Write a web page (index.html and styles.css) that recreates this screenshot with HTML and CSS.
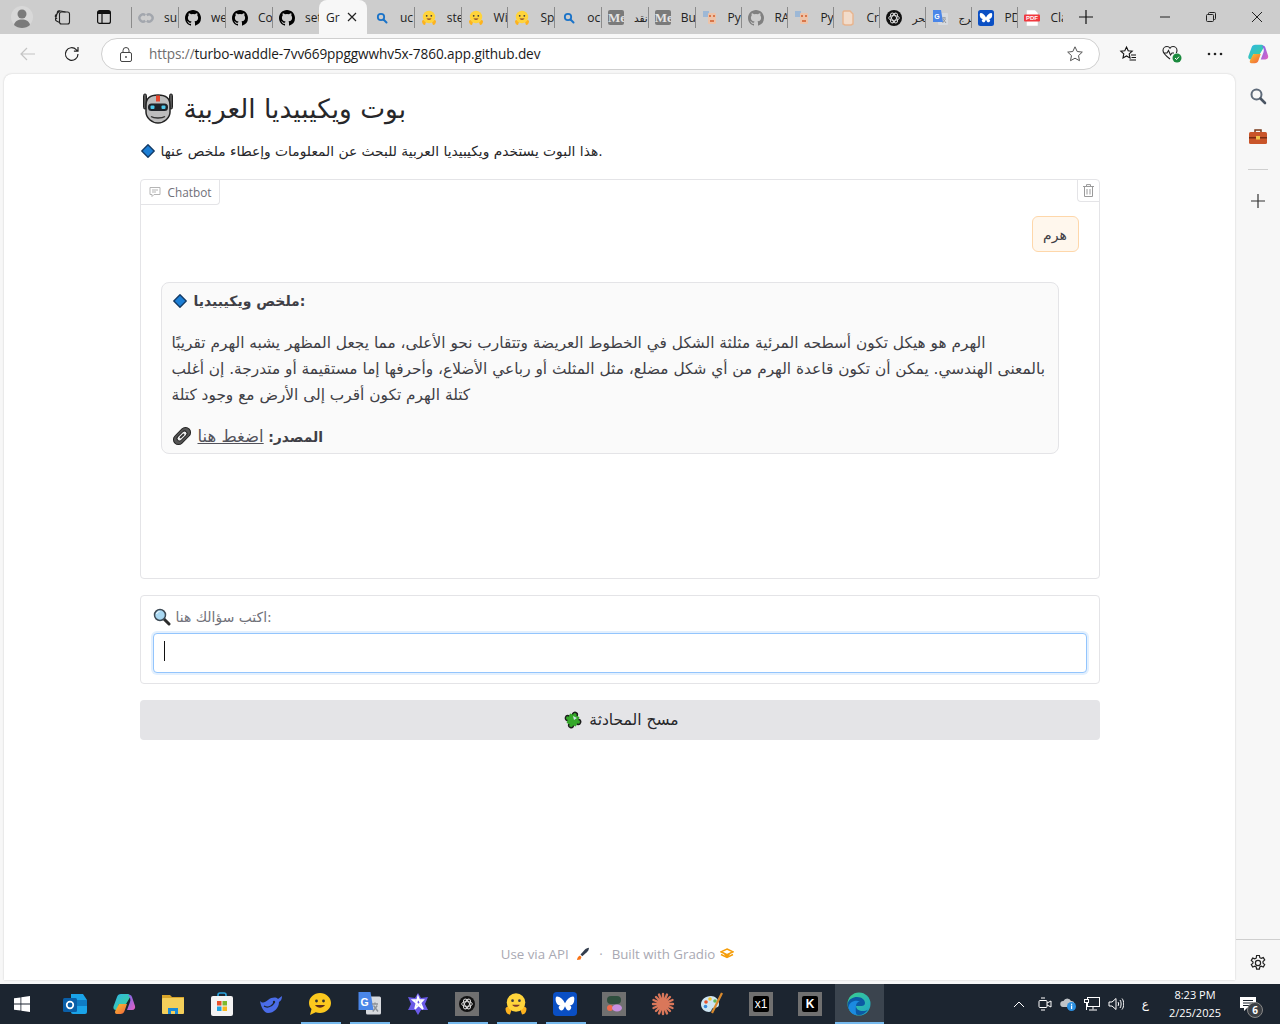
FILE: index.html
```html
<!DOCTYPE html>
<html lang="ar">
<head>
  <meta charset="UTF-8">
  <title>Gradio</title>
  <link rel="stylesheet" href="styles.css">
</head>
<body dir="ltr">
  <svg class="sprites" aria-hidden="true">
    <defs>
      <symbol id="i-github" viewBox="0 0 16 16"><path d="M8 0C3.58 0 0 3.58 0 8c0 3.54 2.29 6.53 5.47 7.59.4.07.55-.17.55-.38v-1.34c-2.23.48-2.7-1.07-2.7-1.07-.36-.92-.89-1.17-.89-1.17-.73-.5.05-.49.05-.49.8.06 1.23.83 1.23.83.71 1.22 1.87.87 2.33.66.07-.52.28-.87.51-1.07-1.78-.2-3.64-.89-3.64-3.95 0-.87.31-1.59.82-2.15-.08-.2-.36-1.02.08-2.12 0 0 .67-.21 2.2.82a7.6 7.6 0 0 1 4 0c1.53-1.04 2.2-.82 2.2-.82.44 1.1.16 1.92.08 2.12.51.56.82 1.27.82 2.15 0 3.07-1.87 3.75-3.65 3.95.29.25.54.73.54 1.48v2.2c0 .21.15.46.55.38A8 8 0 0 0 16 8c0-4.42-3.58-8-8-8z"/></symbol>
      <symbol id="i-search" viewBox="0 0 16 16"><circle cx="7" cy="7" r="3.200" fill="none" stroke="#1a73c8" stroke-width="1.800"/><path d="M9.500 9.500l3 3" stroke="#1a73c8" stroke-width="2" stroke-linecap="round"/></symbol>
      <symbol id="i-colab" viewBox="0 0 16 16"><g fill="none" stroke="#a2a6ad" stroke-width="2.400"><path d="M7.200 5.300a3.500 3.500 0 1 0 0 5.400"/><path d="M8.800 5.300a3.500 3.500 0 1 1 0 5.400"/></g></symbol>
      <symbol id="i-hf" viewBox="0 0 16 16"><path d="M1 11c1-2 3-1 4 1l-1 3c-2 0-3-2-3-4zM15 11c-1-2-3-1-4 1l1 3c2 0 3-2 3-4z" fill="#fdb21e"/><circle cx="8" cy="7" r="6.200" fill="#ffd43b"/><circle cx="5.700" cy="5.800" r=".9" fill="#3a3b45"/><circle cx="10.300" cy="5.800" r=".9" fill="#3a3b45"/><path d="M5.500 8.500c1 1.800 4 1.800 5 0z" fill="#7a3b2e"/></symbol>
      <symbol id="i-py" viewBox="0 0 16 16"><rect x="1" y="1" width="6" height="6" fill="#9db8d6"/><rect x="6" y="3" width="8" height="11" rx="1" fill="#edc3a8"/><rect x="7" y="5" width="2" height="2" fill="#d9764a"/><rect x="11" y="5" width="2" height="2" fill="#d9764a"/><rect x="8" y="10" width="4" height="2" fill="#d9764a"/></symbol>
      <symbol id="i-doc" viewBox="0 0 16 16"><path d="M4 1h6l3 3v10l-2 1H5l-2-1V2z" fill="#f2dccb" stroke="#e8b48e" stroke-width="1.400"/></symbol>
      <symbol id="i-openai" viewBox="0 0 16 16"><circle cx="8" cy="8" r="8" fill="#111"/><g fill="none" stroke="#ddd" stroke-width=".9"><ellipse cx="8" cy="8" rx="5.400" ry="2.400"/><ellipse cx="8" cy="8" rx="5.400" ry="2.400" transform="rotate(60 8 8)"/><ellipse cx="8" cy="8" rx="5.400" ry="2.400" transform="rotate(120 8 8)"/></g></symbol>
      <symbol id="i-translate" viewBox="0 0 16 16"><rect x="6" y="3" width="10" height="12" rx="1" fill="#d7dade"/><path d="M1 0h8l2 12H1z" fill="#4a86e8"/><text x="5" y="9" font-size="7" font-family="Liberation Sans" font-weight="700" text-anchor="middle" fill="#fff">G</text><path d="M10 8h4M12 7v1M10.500 13l3-4M11 9l3 4" stroke="#8a9096" stroke-width=".9" fill="none"/></symbol>
      <symbol id="i-fly" viewBox="0 0 16 16"><rect width="16" height="16" rx="2.500" fill="#0a4fc4"/><path d="M8 7.500C6.500 4.500 4.600 3 2.800 3 1.600 3 1.600 4.600 2 6.500c.4 1.800 1.800 2.600 3.400 2.400-1.800.4-2 1.600-1 2.800 1.200 1.400 2.600.6 3.600-2.200 1 2.800 2.400 3.600 3.600 2.200 1-1.200.8-2.400-1-2.800 1.600.2 3-.6 3.400-2.400.4-1.900.4-3.500-.8-3.500-1.800 0-3.700 1.500-5.200 4.500z" fill="#fff"/></symbol>
      <symbol id="i-pdf" viewBox="0 0 16 16"><path d="M2.500 0H11l3 3v13H2.500z" fill="#fff" stroke="#ccc" stroke-width=".5"/><rect y="4.500" width="16" height="7" rx="1" fill="#f0383e"/><text x="8" y="10.300" font-size="6" font-family="Liberation Sans" font-weight="700" text-anchor="middle" fill="#fff">PDF</text></symbol>
      <symbol id="i-diamond" viewBox="0 0 14 14"><path d="M7 .8L13.200 7 7 13.200 .8 7z" fill="#1c7fd6" stroke="#123a66" stroke-width="1.400" stroke-linejoin="round"/></symbol>
      <symbol id="i-copilot" viewBox="0 0 24 24"><defs><linearGradient id="cp1" x1="0" y1="0" x2="1" y2="1"><stop offset="0" stop-color="#2fb5e8"/><stop offset="1" stop-color="#3dd68c"/></linearGradient><linearGradient id="cp2" x1="0" y1="0" x2="1" y2="1"><stop offset="0" stop-color="#6f6df0"/><stop offset="1" stop-color="#e95fc0"/></linearGradient><linearGradient id="cp3" x1="0" y1="0" x2="1" y2="1"><stop offset="0" stop-color="#f7c22e"/><stop offset="1" stop-color="#f2603c"/></linearGradient></defs><path d="M9 2h7c1.500 0 2 1 2.500 2.500L14 12H7l-2 6H4C2 18 1 16.500 1.500 14.500L5 5c.6-1.800 2-3 4-3z" fill="url(#cp1)"/><path d="M18 3c1 0 1.500.8 2 2l3 9c.6 2-.5 4-3 4h-5l3-8c1-2.500 0-5-2-7z" fill="url(#cp2)"/><path d="M7 12h8l-2.500 7c-.6 2-2 3-4 3H5c-2 0-2.500-1.600-1.500-3.500z" fill="url(#cp3)"/></symbol>
      <symbol id="i-edge" viewBox="0 0 24 24"><defs><linearGradient id="eg1" x1="0" y1="0" x2="1" y2="1"><stop offset="0" stop-color="#3bd08f"/><stop offset="1" stop-color="#1fa3c9"/></linearGradient></defs><circle cx="12" cy="12" r="11.500" fill="url(#eg1)"/><path d="M.6 12C1.500 7 6 5 10 5c5 0 8 3 8 6 0 2-1.500 3-3.500 3H9c0 3 3 5 7 5 2 0 3.500-.5 5-1.500-2 3.500-5.500 5.500-9 5.500C6 23 1 18.500.6 12z" fill="#0c59a4"/><path d="M9 14c0-3 2-4.500 4-4.500-5-2-11 .5-11.500 6C2.500 20 6 23 10 23c-2-2-1-9-1-9z" fill="#1b8ae0"/></symbol>
    </defs>
  </svg>

  <div class="tabstrip">
    <div class="profile">
      <svg width="22" height="22" viewBox="0 0 22 22"><circle cx="11" cy="11" r="11" fill="#d8d8d8"/><circle cx="11" cy="8" r="4.500" fill="#7a7a7a"/><path d="M3 19c1-4 4-5.500 8-5.500s7 1.500 8 5.500c-2 2-5 3-8 3s-6-1-8-3z" fill="#7a7a7a"/></svg>
    </div>
    <div class="strip-btn strip-first">
      <svg width="18" height="18" viewBox="0 0 18 18" fill="none" stroke="#222" stroke-width="1.100"><rect x="6.500" y="4" width="10" height="12" rx="2"/><path d="M6.500 14.500L3.500 13c-1-.5-1.200-1-1-2l2-7c.2-1 1-1.500 2-1.200l6 1.200M4 11L2.500 9c-.6-1-.4-1.500.3-2.200L7 2.500"/></svg>
    </div>
    <div class="strip-btn">
      <svg width="16" height="16" viewBox="0 0 16 16" fill="none" stroke="#111" stroke-width="1.200"><rect x="1.600" y="1.600" width="12.800" height="12.800" rx="2"/><path d="M1.600 4.500h12.800M6 4.500v9.900"/><path d="M2 2h12v2.500H2z" fill="#111" stroke="none"/></svg>
    </div>
    <div class="tabs">
      <div class="tab"><svg class="fav"><use href="#i-colab"/></svg><span class="tab-title">su</span></div>
      <div class="tab"><svg class="fav"><use href="#i-github"/></svg><span class="tab-title">we</span></div>
      <div class="tab"><svg class="fav"><use href="#i-github"/></svg><span class="tab-title">Co</span></div>
      <div class="tab"><svg class="fav"><use href="#i-github"/></svg><span class="tab-title">set</span></div>
      <div class="tab tab-active"><span class="tab-title">Gr</span>
        <svg class="tab-close" width="10" height="10" viewBox="0 0 10 10"><path d="M1 1l8 8M9 1L1 9" stroke="#222" stroke-width="1.200"/></svg>
      </div>
      <div class="tab tab-next"><svg class="fav"><use href="#i-search"/></svg><span class="tab-title">uc</span></div>
      <div class="tab"><svg class="fav"><use href="#i-hf"/></svg><span class="tab-title">ste</span></div>
      <div class="tab"><svg class="fav"><use href="#i-hf"/></svg><span class="tab-title">Wi</span></div>
      <div class="tab"><svg class="fav"><use href="#i-hf"/></svg><span class="tab-title">Sp</span></div>
      <div class="tab"><svg class="fav"><use href="#i-search"/></svg><span class="tab-title">oc</span></div>
      <div class="tab"><span class="medium">Me</span><span class="tab-title tab-ar">نقد</span></div>
      <div class="tab"><span class="medium">Me</span><span class="tab-title">Bu</span></div>
      <div class="tab"><svg class="fav"><use href="#i-py"/></svg><span class="tab-title">Py</span></div>
      <div class="tab"><svg class="fav fav-grey"><use href="#i-github"/></svg><span class="tab-title">RA</span></div>
      <div class="tab"><svg class="fav"><use href="#i-py"/></svg><span class="tab-title">Py</span></div>
      <div class="tab"><svg class="fav"><use href="#i-doc"/></svg><span class="tab-title">Cr</span></div>
      <div class="tab"><svg class="fav"><use href="#i-openai"/></svg><span class="tab-title tab-ar">تحر</span></div>
      <div class="tab"><svg class="fav"><use href="#i-translate"/></svg><span class="tab-title tab-ar">ترج</span></div>
      <div class="tab"><svg class="fav"><use href="#i-fly"/></svg><span class="tab-title">PD</span></div>
      <div class="tab"><svg class="fav"><use href="#i-pdf"/></svg><span class="tab-title">Cla</span></div>
    </div>
    <div class="new-tab">
      <svg width="16" height="16" viewBox="0 0 16 16"><path d="M8 1v14M1 8h14" stroke="#111" stroke-width="1.200"/></svg>
    </div>
    <div class="win-controls">
      <div class="win-btn"><svg width="10" height="10" viewBox="0 0 10 10"><path d="M0 5h10" stroke="#222"/></svg></div>
      <div class="win-btn"><svg width="10" height="10" viewBox="0 0 10 10" fill="none" stroke="#222"><rect x=".5" y="2.500" width="7" height="7" rx="1"/><path d="M2.500 2.500V1.500a1 1 0 0 1 1-1h5a1 1 0 0 1 1 1v5a1 1 0 0 1-1 1h-1"/></svg></div>
      <div class="win-btn"><svg width="10" height="10" viewBox="0 0 10 10"><path d="M0 0l10 10M10 0L0 10" stroke="#222"/></svg></div>
    </div>
  </div>

  <div class="toolbar">
    <div class="nav-btn">
      <svg width="16" height="14" viewBox="0 0 16 14" fill="none" stroke="#c4c4c4" stroke-width="1.200"><path d="M15 7H1M7 1L1 7l6 6"/></svg>
    </div>
    <div class="nav-btn">
      <svg width="16" height="16" viewBox="0 0 16 16" fill="none" stroke="#222" stroke-width="1.200"><path d="M14 8a6.300 6.300 0 1 1-1.800-4.400L14 5.200M14 1v4.200H9.900"/></svg>
    </div>
    <div class="address">
      <svg class="lock" width="12" height="15" viewBox="0 0 12 15" fill="none" stroke="#444"><rect x=".5" y="5.500" width="11" height="9" rx="1.500"/><path d="M3 5.500V3.500a3 3 0 0 1 6 0v2"/><circle cx="6" cy="10" r=".9" fill="#444" stroke="none"/></svg>
      <span class="url"><span class="url-scheme">https://</span>turbo-waddle-7vv669ppggwwhv5x-7860.app.github.dev</span>
      <svg class="star" width="18" height="18" viewBox="0 0 18 18" fill="none" stroke="#555"><path d="M9 1.800l2.200 4.700 5.100.6-3.800 3.500 1 5.100L9 13.200l-4.500 2.500 1-5.100-3.800-3.500 5.100-.6z"/></svg>
    </div>
    <div class="tool-icons">
      <svg width="18" height="18" viewBox="0 0 18 18" fill="none" stroke="#111" stroke-width="1.100"><path d="M7.500 2l1.700 3.700 4 .5-3 2.700.8 4-3.500-2-3.500 2 .8-4-3-2.700 4-.5zM12 10h5M12.500 12.500h4.500M10.500 15h6.500"/></svg>
      <svg width="22" height="20" viewBox="0 0 22 20"><path d="M9 15C5 12 2 9.500 2 6.500 2 4 4 2.500 6 2.500c1.400 0 2.400.7 3 1.700.6-1 1.600-1.700 3-1.700 2 0 4 1.500 4 4 0 1-.3 1.700-.7 2.500M2.500 9H6l1.500-2.500 2 4.500L11 9h2" fill="none" stroke="#222" stroke-width="1.100"/><circle cx="16" cy="14" r="4.500" fill="#1b8a3e"/><path d="M14 14l1.500 1.500 2.500-2.800" fill="none" stroke="#fff" stroke-width="1"/></svg>
      <svg width="16" height="4" viewBox="0 0 16 4" fill="#222"><circle cx="2" cy="2" r="1.300"/><circle cx="8" cy="2" r="1.300"/><circle cx="14" cy="2" r="1.300"/></svg>
      <svg width="22" height="22"><use href="#i-copilot"/></svg>
    </div>
  </div>

  <div class="middle">
    <main class="page">
      <div class="content">
        <h1 class="title">
          <svg class="robot" width="32" height="32" viewBox="0 0 32 32">
            <rect x="1.500" y="1" width="3" height="15" rx="1.500" fill="#555" stroke="#222"/>
            <rect x="27.500" y="1" width="3" height="15" rx="1.500" fill="#555" stroke="#222"/>
            <path d="M4 12c0-7 5-10 12-10s12 3 12 10v7c0 6-6 11-12 11S4 25 4 19z" fill="#bdbdbd" stroke="#222" stroke-width="1.500"/>
            <rect x="14" y="2.500" width="4" height="6" fill="#e8452c"/>
            <rect x="6" y="10.500" width="20" height="7.500" rx="3.500" fill="#1f2328"/>
            <rect x="8.500" y="12.500" width="4" height="3.500" rx="1" fill="#4fc8ea"/>
            <rect x="19.500" y="12.500" width="4" height="3.500" rx="1" fill="#4fc8ea"/>
            <path d="M9 23.500c3 2 11 2 14 0" fill="none" stroke="#333" stroke-width="1.500"/>
          </svg>
          <span>بوت ويكيبيديا العربية</span>
        </h1>
        <p class="subtitle">
          <svg class="diamond" width="14" height="14"><use href="#i-diamond"/></svg>
          <span>هذا البوت يستخدم ويكيبيديا العربية للبحث عن المعلومات وإعطاء ملخص عنها.</span>
        </p>

        <section class="chatbot">
          <div class="chat-head">
            <div class="chat-label">
              <svg width="12" height="12" viewBox="0 0 12 12" fill="none" stroke="#b5b5b5"><path d="M1 1.500h10v7H5L3 10.500v-2H1z"/><path d="M3 4h6M3 6h4"/></svg>
              <span>Chatbot</span>
            </div>
            <div class="chat-trash">
              <svg width="11" height="13" viewBox="0 0 11 13" fill="none" stroke="#9a9a9a"><path d="M0 2.500h11M3.500 2.500V.6h4v1.900M1.500 2.500v10h8v-10M4 5v5.500M7 5v5.500"/></svg>
            </div>
          </div>
          <div class="user-row">
            <div class="user-bubble">هرم</div>
          </div>
          <div class="bot-bubble">
            <p class="bot-heading">
              <svg width="14" height="14"><use href="#i-diamond"/></svg>
              <strong>ملخص ويكيبيديا:</strong>
            </p>
            <p class="bot-text">
              <span class="line">الهرم هو هيكل تكون أسطحه المرئية مثلثة الشكل في الخطوط العريضة وتتقارب نحو الأعلى، مما يجعل المظهر يشبه الهرم تقريبًا</span>
              <span class="line">بالمعنى الهندسي. يمكن أن تكون قاعدة الهرم من أي شكل مضلع، مثل المثلث أو رباعي الأضلاع، وأحرفها إما مستقيمة أو متدرجة. إن أغلب</span>
              <span class="line">كتلة الهرم تكون أقرب إلى الأرض مع وجود كتلة</span>
            </p>
            <p class="bot-source">
              <svg width="20" height="20" viewBox="0 0 20 20" fill="none"><g transform="rotate(-45 10 10)"><rect x="0" y="5" width="20" height="10" rx="5" fill="#555" stroke="#222"/><rect x="4" y="7.500" width="12" height="5" rx="2.500" fill="#eee" stroke="#222"/><rect x="7" y="9" width="6" height="2" rx="1" fill="#333"/></g></svg>
              <span><strong>المصدر:</strong> <a href="#">اضغط هنا</a></span>
            </p>
          </div>
        </section>

        <section class="ask">
          <label class="ask-label">
            <svg width="18" height="18" viewBox="0 0 18 18"><path d="M10.500 10.500l5.500 5.500" stroke="#2b2b2b" stroke-width="3" stroke-linecap="round"/><circle cx="7" cy="7" r="5.500" fill="#a9d8f2" stroke="#3d4a55" stroke-width="1.500"/><path d="M3.500 6c.5-1.500 1.500-2.300 3-2.500" stroke="#fff" fill="none"/></svg>
            <span>اكتب سؤالك هنا:</span>
          </label>
          <div class="ask-input"><span class="caret"></span></div>
        </section>

        <button class="clear-btn" type="button">
          <svg width="18" height="18" viewBox="0 0 18 18"><g transform="rotate(20 9 9)" fill="#35a82a" stroke="#1c1c1c" stroke-width="1.400"><circle cx="9" cy="3.500" r="2.500"/><circle cx="14.500" cy="9" r="2.500"/><circle cx="9" cy="14.500" r="2.500"/><circle cx="3.500" cy="9" r="2.500"/><rect x="4" y="4" width="10" height="10" stroke="none"/></g><path d="M9 5l4 2-3 2z" fill="#cfe3ea"/></svg>
          <span>مسح المحادثة</span>
        </button>

        <footer class="page-foot">
          <span>Use via API</span>
          <svg width="14" height="14" viewBox="0 0 14 14"><path d="M4.500 7.500l4-4.500c1.200-1.200 2.800-2.200 4.500-2.200 0 1.700-1 3.300-2.200 4.500l-4.500 4z" fill="#333d4d"/><path d="M4 8.500l1.500 1.500L4.500 12.500 1 13c.2-2 1.200-3.800 3-4.500z" fill="#f97316"/></svg>
          <span class="foot-dot">·</span>
          <span>Built with Gradio</span>
          <svg class="foot-logo" width="14" height="12" viewBox="0 0 14 12" fill="none" stroke="#f59e0b" stroke-width="1.500"><path d="M7 1l6 2.800L7 6.600 1 3.800zM1 6.500l6 3 6-3M4 5.200L7 8.500l3-3.300"/></svg>
        </footer>
      </div>
    </main>

    <aside class="sidebar">
      <svg class="side-icon" width="18" height="18" viewBox="0 0 18 18"><circle cx="7.500" cy="7.500" r="5" fill="none" stroke="#5f6b7a" stroke-width="2"/><path d="M11.500 11.500L16 16" stroke="#4a5563" stroke-width="2.600" stroke-linecap="round"/></svg>
      <svg class="side-icon side-tools" width="18" height="16" viewBox="0 0 18 16"><path d="M6 3V1h6v2" fill="none" stroke="#7a3b1c" stroke-width="1.500"/><rect y="3" width="18" height="12" rx="1.500" fill="#c9552a"/><rect y="8" width="18" height="1.500" fill="#7a2c12"/><rect x="7" y="7" width="4" height="3.500" fill="#f1c34a"/></svg>
      <div class="side-rule"></div>
      <svg class="side-icon" width="14" height="14" viewBox="0 0 14 14"><path d="M7 0v14M0 7h14" stroke="#333" stroke-width="1.200"/></svg>
      <div class="side-spacer"></div>
      <div class="side-rule side-rule-low"></div>
      <svg class="side-icon side-gear" width="18" height="18" viewBox="0 0 18 18" fill="none" stroke="#222" stroke-width="1.200"><circle cx="9" cy="9" r="2.600"/><path d="M7.600 1.500h2.800l.4 2.200 1.400.7 2.100-.8 1.400 2.400-1.700 1.500v1.600l1.700 1.500-1.400 2.400-2.100-.8-1.400.7-.4 2.200H7.600l-.4-2.200-1.400-.7-2.100.8-1.400-2.400 1.700-1.500V8L2.300 6.500 3.700 4.100l2.100.8 1.400-.7z"/></svg>
    </aside>
  </div>
  <div class="page-gap"></div>

  <div class="taskbar">
    <div class="start">
      <svg width="16" height="16" viewBox="0 0 16 16" fill="#fff"><path d="M0 2.300l6.500-.9v6.200H0zM7.300 1.300L16 0v7.600H7.300zM0 8.400h6.500v6.200L0 13.700zM7.300 8.400H16V16l-8.700-1.300z"/></svg>
    </div>
    <div class="task-icons">
      <div class="task"><svg width="24" height="24" viewBox="0 0 24 24"><path d="M8 2h12l4 6v12a2 2 0 0 1-2 2H10a2 2 0 0 1-2-2z" fill="#1aa3e8"/><path d="M8 8h16v6H8z" fill="#0f7cc4"/><rect y="6" width="14" height="14" rx="1.500" fill="#0a5fa8"/><circle cx="7" cy="13" r="3.300" fill="none" stroke="#fff" stroke-width="1.700"/></svg></div>
      <div class="task"><svg width="24" height="24"><use href="#i-copilot"/></svg></div>
      <div class="task"><svg width="24" height="22" viewBox="0 0 24 22"><path d="M1 2h8l2 2h12v5H1z" fill="#d9a52a"/><rect x="1" y="5" width="22" height="16" rx="1" fill="#f4cf5a"/><path d="M7 15h10v6h-3v-3h-4v3H7z" fill="#1a8ad8"/></svg></div>
      <div class="task"><svg width="24" height="24" viewBox="0 0 24 24"><path d="M8 5V3a2 2 0 0 1 2-2h4a2 2 0 0 1 2 2v2" fill="none" stroke="#29a3dd" stroke-width="1.600"/><rect x="1" y="4" width="22" height="20" rx="2" fill="#f3f3f3"/><rect x="7" y="9" width="4.500" height="4.500" fill="#e8512a"/><rect x="12.500" y="9" width="4.500" height="4.500" fill="#7db92c"/><rect x="7" y="14.500" width="4.500" height="4.500" fill="#1ea3e0"/><rect x="12.500" y="14.500" width="4.500" height="4.500" fill="#f7b81c"/></svg></div>
      <div class="task"><svg width="24" height="20" viewBox="0 0 24 20"><path d="M1 7c3 3 5 1 8-1 4-3 8-3 10-1l4-3c0 3-1 5-3 6 0 6-5 11-11 11C5 19 2 13 1 7z" fill="#4a6ce8"/><circle cx="15" cy="8" r="1.200" fill="#1c2530"/><path d="M5 12c3 2 7 1 10-3" stroke="#1c2530" stroke-width="1.300" fill="none"/></svg></div>
      <div class="task task-open"><svg width="24" height="24" viewBox="0 0 24 24"><path d="M12 1c6 0 11 4.500 11 10s-5 10-11 10c-1.500 0-3-.3-4.300-.8L2 23l1.500-6C2 15.500 1 13.500 1 11 1 5.500 6 1 12 1z" fill="#fbc81e"/><circle cx="8.500" cy="9" r="1.400" fill="#333"/><circle cx="15.500" cy="9" r="1.400" fill="#333"/><path d="M7 13c2.500 3.500 7.500 3.500 10 0z" fill="#5b2c1c"/></svg></div>
      <div class="task task-open"><svg width="24" height="24"><use href="#i-translate"/></svg></div>
      <div class="task"><svg width="24" height="24" viewBox="0 0 24 24"><path d="M12 1l3 5 7-1-3 7 3 6-7 0-3 5-3-5-7 0 3-6-3-7 7 1z" fill="#6a5ae8"/><path d="M7 8h10l-8 9 3-12 5 12z" fill="none" stroke="#fff" stroke-width="1.700"/></svg></div>
      <div class="task task-open"><div class="app-tile"><svg width="16" height="16"><use href="#i-openai"/></svg></div></div>
      <div class="task task-open"><svg width="24" height="24"><use href="#i-hf"/></svg></div>
      <div class="task task-open"><svg width="24" height="24"><use href="#i-fly"/></svg></div>
      <div class="task"><div class="app-tile"><svg width="18" height="18" viewBox="0 0 18 18"><rect x="2" y="1" width="14" height="8" rx="4" fill="#2f4f3e"/><circle cx="5" cy="13" r="3" fill="#ef6a4c"/><ellipse cx="12" cy="13" rx="5" ry="3.500" fill="#c690e0"/></svg></div></div>
      <div class="task"><svg width="24" height="24" viewBox="0 0 24 24" stroke="#d9775a" stroke-width="2.400" stroke-linecap="round"><path d="M12 2v20M2 12h20M5 5l14 14M19 5L5 19M8 2.500l8 19M16 2.500l-8 19M2.500 8l19 8M2.500 16l19-8"/></svg></div>
      <div class="task"><svg width="24" height="24" viewBox="0 0 24 24"><path d="M11 4C5 4 1 8 1 12.500S5 20 9 20c3 0 2-3 4-4 2-.8 6 .5 6-4 0-5-4-8-8-8z" fill="#cfe6f2"/><circle cx="6" cy="10" r="1.800" fill="#e8512a"/><circle cx="10" cy="7" r="1.800" fill="#f4c430"/><circle cx="15" cy="9" r="1.800" fill="#5cb85c"/><circle cx="5.500" cy="14.500" r="1.800" fill="#3b8ad8"/><path d="M22 1L12 21" stroke="#d98a2c" stroke-width="2.200"/></svg></div>
      <div class="task"><div class="app-tile"><span class="app-mark app-mark-thin">x1</span></div></div>
      <div class="task"><div class="app-tile"><span class="app-mark">K</span></div></div>
      <div class="task task-active"><svg width="24" height="24"><use href="#i-edge"/></svg></div>
    </div>
    <div class="tray">
      <svg class="tray-icon" width="12" height="7" viewBox="0 0 12 7" fill="none" stroke="#fff"><path d="M1 6l5-5 5 5"/></svg>
      <svg class="tray-icon" width="14" height="16" viewBox="0 0 14 16" fill="none" stroke="#fff"><rect x="1" y="4.500" width="8" height="7" rx="1"/><path d="M9 7l4-2v6l-4-2M3 2h4M3 14h4"/></svg>
      <svg class="tray-icon" width="16" height="14" viewBox="0 0 16 14"><path d="M3 10a3 3 0 0 1 .5-6A4 4 0 0 1 11 4a3 3 0 0 1 1 6z" fill="#bfc3c7"/><circle cx="11.500" cy="9.500" r="4.500" fill="#2b8fe0"/><rect x="11" y="8.500" width="1.200" height="3.500" fill="#fff"/><rect x="11" y="6.700" width="1.200" height="1.200" fill="#fff"/></svg>
      <svg class="tray-icon" width="16" height="14" viewBox="0 0 16 14" fill="none" stroke="#fff"><rect x="3.500" y=".5" width="12" height="9"/><rect x=".5" y="2.500" width="4" height="3" fill="#1c2530"/><path d="M9 9.500v3M5 13h8M2.500 5.500V13"/></svg>
      <svg class="tray-icon" width="16" height="14" viewBox="0 0 16 14" fill="none" stroke="#fff"><path d="M1 5h3l4-3.500v11L4 9H1zM10 5c.8.800.8 3.200 0 4M12 3c1.500 1.800 1.500 6.200 0 8M14 1.500c2.300 2.800 2.300 8.200 0 11"/></svg>
      <span class="tray-lang">ع</span>
      <div class="clock"><span>8:23 PM</span><span>2/25/2025</span></div>
      <div class="notif">
        <svg width="16" height="15" viewBox="0 0 16 15"><path d="M0 0h16v11H7l-3 3v-3H0z" fill="#fff"/><path d="M3 3.500h10M3 6h10M3 8.500h7" stroke="#1c2530"/></svg>
        <span class="notif-count">6</span>
      </div>
    </div>
  </div>
</body>
</html>
```

FILE: styles.css
```css
* {
  box-sizing: border-box;
}
html,
body {
  margin: 0;
  height: 1024px;
  overflow: hidden;
}
body {
  display: flex;
  flex-direction: column;
  background: #f7f7f7;
  font-family: "Open Sans", "DejaVu Sans", sans-serif;
  color: #27272a;
}
p,
h1 {
  margin: 0;
}
svg {
  flex: none;
}
.sprites {
  width: 0;
  height: 0;
  flex: none;
}

/* tab strip */
.tabstrip {
  height: 34px;
  flex: none;
  display: flex;
  align-items: stretch;
  background: #cdcdcd;
}
.profile {
  width: 44px;
  display: flex;
  align-items: center;
  justify-content: center;
}
.strip-btn {
  width: 38px;
  margin-right: 3px;
  display: flex;
  align-items: center;
  justify-content: center;
}
.strip-first {
  width: 35px;
  margin-right: 6px;
}
.tabs {
  margin-left: 5px;
  width: 932px;
  display: flex;
}
.tab {
  flex: 0 0 46.800px;
  overflow: hidden;
  display: flex;
  align-items: center;
  padding-left: 6px;
  border-left: 1px solid #8b8b8b;
  margin: 7px 0 6px;
  font-size: 12px;
  color: #222;
}
.tab:nth-child(-n+4) {
  flex-basis: 47px;
}
.tab:nth-child(n+14) {
  flex-basis: 46px;
}
.tab .fav {
  width: 16px;
  height: 16px;
}
.fav-grey {
  fill: #808080;
}
.tab-title {
  margin-left: 10px;
  white-space: nowrap;
}
.tab-ar {
  font-size: 10.500px;
}
.medium {
  flex: none;
  width: 16px;
  height: 15px;
  border-radius: 2px;
  background: #7a7a7a;
  color: #e4e4e4;
  font: 700 13px/15px "Liberation Serif", serif;
  overflow: hidden;
}
.tab-active {
  flex: 0 0 48px;
  margin: 0;
  padding: 0 0 0 7px;
  border: none;
  border-radius: 8px 8px 0 0;
  background: #f7f7f7;
}
.tab-active .tab-title {
  margin: 0;
}
.tab-close {
  margin-left: 7px;
}
.tab-next {
  border-left: none;
  padding-left: 7px;
}
.new-tab {
  width: 46px;
  display: flex;
  align-items: center;
  justify-content: center;
}
.win-controls {
  margin-left: auto;
  display: flex;
}
.win-btn {
  width: 46px;
  display: flex;
  align-items: center;
  justify-content: center;
}

/* toolbar */
.toolbar {
  height: 40px;
  flex: none;
  display: flex;
  align-items: center;
}
.nav-btn {
  width: 44px;
  display: flex;
  align-items: center;
  justify-content: center;
}
.nav-btn:first-child {
  margin-left: 6px;
}
.address {
  margin-left: 7px;
  flex: none;
  width: 999px;
  height: 32px;
  display: flex;
  align-items: center;
  padding: 0 15px 0 18px;
  background: #fff;
  border: 1px solid #cfcfcf;
  border-radius: 16px;
}
.url {
  margin-left: 17px;
  padding-bottom: 1px;
  font-size: 13.600px;
  color: #1a1a1a;
  letter-spacing: -.1px;
}
.url-scheme {
  color: #6e6e6e;
}
.star {
  margin-left: auto;
}
.tool-icons {
  margin-left: 19px;
  flex: none;
  width: 161px;
  display: flex;
  align-items: center;
  justify-content: space-between;
  padding-right: 11px;
}

/* gradio page */
.middle {
  flex: none;
  height: 906px;
  display: flex;
  padding-left: 4px;
}
.page {
  width: 1232px;
  background: #fff;
  border-radius: 8px 8px 0 0;
  box-shadow: 0 0 2px rgba(0, 0, 0, .2);
}
.content {
  width: 960px;
  height: 100%;
  margin: 0 auto;
  display: flex;
  flex-direction: column;
}
.title {
  margin-top: 19px;
  height: 32px;
  display: flex;
  align-items: center;
  gap: 10px;
  font-family: "DejaVu Sans", sans-serif;
  font-size: 26.400px;
  font-weight: 400;
  line-height: 32px;
  padding-left: 2px;
  color: #27272a;
}
.subtitle {
  margin-top: 15px;
  height: 22px;
  display: flex;
  align-items: center;
  gap: 6px;
  padding-left: 1px;
  font-size: 13.800px;
  line-height: 22px;
  font-family: "DejaVu Sans", sans-serif;
}
.chatbot {
  margin-top: 17px;
  height: 400px;
  flex: none;
  border: 1px solid #e4e4e7;
  border-radius: 4px;
  display: flex;
  flex-direction: column;
}
.chat-head {
  height: 25px;
  display: flex;
  justify-content: space-between;
  align-items: flex-start;
}
.chat-label {
  height: 25px;
  width: 79px;
  display: flex;
  align-items: center;
  gap: 7px;
  padding-left: 8px;
  border-right: 1px solid #e4e4e7;
  border-bottom: 1px solid #e4e4e7;
  border-radius: 0 0 4px 0;
  font-size: 11.800px;
  color: #71717a;
}
.chat-trash {
  width: 22px;
  height: 22px;
  display: flex;
  align-items: center;
  justify-content: center;
  border-left: 1px solid #e4e4e7;
  border-bottom: 1px solid #e4e4e7;
  border-radius: 0 0 0 4px;
}
.user-row {
  margin-top: 11px;
  padding-right: 20px;
  display: flex;
  justify-content: flex-end;
}
.user-bubble {
  width: 47px;
  height: 36px;
  background: #fff7ed;
  border: 1px solid #fed7aa;
  border-radius: 6px;
  text-align: center;
  padding-top: 8px;
  font: 14px/20px "DejaVu Sans", sans-serif;
  color: #3f3f46;
}
.bot-bubble {
  margin: 30px 0 0 20px;
  width: 898px;
  height: 172px;
  background: #fafafa;
  border: 1px solid #e4e4e7;
  border-radius: 8px;
  padding: 7px 10px 0;
  font-family: "DejaVu Sans", sans-serif;
  color: #3f3f46;
}
.bot-heading {
  height: 22px;
  display: flex;
  align-items: center;
  gap: 7px;
  padding-left: 1px;
  font-size: 14px;
}
.bot-text {
  margin-top: 18px;
  font-size: 15.350px;
  line-height: 26px;
}
.line {
  display: block;
  white-space: nowrap;
}
.bot-source {
  margin-top: 17px;
  height: 22px;
  display: flex;
  align-items: center;
  gap: 6px;
  font-size: 14px;
}
.bot-source a {
  font-size: 16.500px;
  color: #52525b;
}
.ask {
  margin-top: 16px;
  height: 89px;
  flex: none;
  border: 1px solid #e4e4e7;
  border-radius: 4px;
  padding: 12px 12px 0;
}
.ask-label {
  height: 18px;
  display: flex;
  align-items: center;
  gap: 5px;
  font: 13.900px/18px "DejaVu Sans", sans-serif;
  color: #71717a;
}
.ask-input {
  margin-top: 7px;
  height: 40px;
  background: #fff;
  border: 1px solid #93c5fd;
  border-radius: 4px;
  box-shadow: 0 0 0 2px #e3f0fe;
  padding: 7px 10px;
}
.caret {
  display: block;
  width: 1px;
  height: 20px;
  background: #111;
}
.clear-btn {
  margin-top: 16px;
  height: 40px;
  flex: none;
  display: flex;
  align-items: center;
  justify-content: center;
  gap: 7px;
  border: none;
  border-radius: 4px;
  padding: 0 0 0 4px;
  background: #e4e4e7;
  color: #27272a;
  font: 15.500px "DejaVu Sans", sans-serif;
}
.page-foot {
  margin-top: auto;
  margin-bottom: 17px;
  height: 18px;
  display: flex;
  align-items: center;
  justify-content: center;
  gap: 7px;
  padding-right: 4px;
  font-size: 13.300px;
  color: #a9a9b3;
}
.foot-dot {
  margin: 0 2px 0 2.500px;
}
.foot-logo {
  margin-left: -2px;
}

/* edge sidebar */
.sidebar {
  flex: 1;
  display: flex;
  flex-direction: column;
  align-items: center;
  padding-left: 1px;
}
.side-icon {
  margin-top: 13px;
}
.side-tools {
  margin-top: 24px;
}
.side-rule {
  width: 20px;
  height: 1px;
  margin: 24px 0 11px;
  background: #cfcfcf;
}
.side-spacer {
  flex: 1;
}
.side-rule-low {
  width: 44px;
  margin: 0;
}
.side-gear {
  margin: 14px 0 8px;
}
.page-gap {
  height: 4px;
  flex: none;
}

/* windows taskbar */
.taskbar {
  height: 40px;
  flex: none;
  display: flex;
  background: #1c2530;
  color: #fff;
}
.start {
  width: 50.500px;
  display: flex;
  align-items: center;
  padding-left: 14px;
}
.task-icons {
  display: flex;
}
.task {
  width: 49px;
  display: flex;
  align-items: center;
  justify-content: center;
  position: relative;
}
.task-open::after,
.task-active::after {
  content: "";
  position: absolute;
  left: 5px;
  right: 4px;
  bottom: 0;
  height: 2px;
  background: #76b9ed;
}
.task-active {
  background: #3b444e;
}
.task-active::after {
  left: 0;
  right: 0;
}
.app-tile {
  width: 24px;
  height: 24px;
  display: flex;
  align-items: center;
  justify-content: center;
  background: #707070;
}
.app-mark {
  width: 16px;
  height: 16px;
  border-radius: 2px;
  background: #000;
  color: #fff;
  text-align: center;
  font: 700 12px/16px "Liberation Sans", sans-serif;
}
.app-mark-thin {
  font-weight: 400;
}
.tray {
  margin-left: auto;
  display: flex;
  align-items: center;
}
.tray-icon {
  margin-right: 8px;
}
.tray-icon:first-child {
  margin-right: 13px;
}
.tray-lang {
  margin: 0 8px 0 10px;
  font: 12px "DejaVu Sans", sans-serif;
}
.clock {
  width: 76px;
  display: flex;
  flex-direction: column;
  align-items: center;
  font-size: 11px;
  line-height: 18px;
}
.notif {
  width: 30px;
  height: 40px;
  margin-right: 17px;
  display: flex;
  align-items: center;
  justify-content: center;
  position: relative;
}
.notif-count {
  position: absolute;
  right: 0;
  bottom: 6px;
  width: 16px;
  height: 16px;
  border-radius: 50%;
  background: #3b3f44;
  border: 1px solid #888;
  text-align: center;
  font-size: 10px;
  font-weight: 700;
  line-height: 14px;
}
```
